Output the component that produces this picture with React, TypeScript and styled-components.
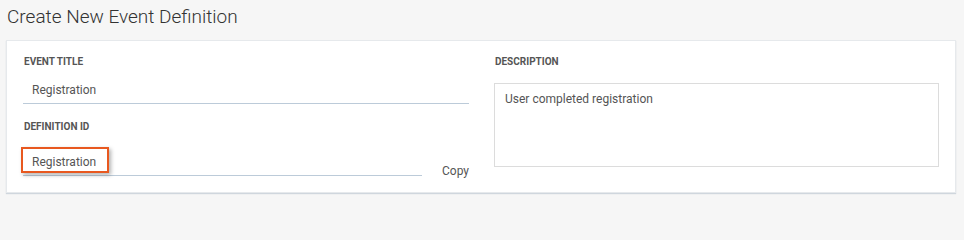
import React from "react";
import styled, { createGlobalStyle } from "styled-components";

const Global = createGlobalStyle`
  html, body { margin: 0; padding: 0; background: #f6f6f6; }
  body { font-family: Roboto, "Liberation Sans", sans-serif; }
  * { box-sizing: border-box; }
`;

const Page = styled.div`
  width: 964px;
  height: 207px;
  background: #f6f6f6;
  padding: 0 8px 0 6px;
`;

const Title = styled.h1`
  margin: 0;
  height: 40px;
  padding: 6px 0 0 1px;
  font-size: 19px;
  line-height: 22px;
  font-weight: 300;
  color: #333;
`;

const Card = styled.div`
  width: 950px;
  height: 153px;
  background: #fff;
  border: 1px solid #e6e9ec;
  box-shadow: 0 1px 1px rgba(160, 175, 190, 0.45);
  padding: 15px 16px 0 16px;
  display: grid;
  grid-template-columns: 446px 445px;
  column-gap: 25px;
`;

const Column = styled.div`
  display: flex;
  flex-direction: column;
`;

const Label = styled.div<{ $gap?: number }>`
  font-size: 10px;
  line-height: 12px;
  font-weight: 700;
  color: #555;
  text-transform: uppercase;
  margin-top: ${(p) => p.$gap ?? 0}px;
  padding-left: 1px;
`;

const InputRow = styled.div`
  display: flex;
  align-items: flex-end;
  gap: 20px;
`;

const InputWrap = styled.div`
  position: relative;
  flex: 1;
`;

const TextInput = styled.div<{ $top: number }>`
  margin-top: ${(p) => p.$top}px;
  height: 28px;
  border-bottom: 1px solid #bccbd9;
  padding: 1px 0 0 9px;
  font-size: 12px;
  line-height: 26px;
  color: #555;
`;

const Highlight = styled.div`
  position: absolute;
  left: -2px;
  width: 88px;
  height: 26px;
  border: 2px solid #e8581f;
  box-shadow: 2px 2px 4px rgba(0, 0, 0, 0.3);
`;

const CopyButton = styled.span`
  font-size: 12px;
  line-height: 15px;
  color: #555;
  margin-bottom: -3px;
`;

const TextArea = styled.div`
  margin-top: 15px;
  height: 84px;
  border: 1px solid #dcdcdc;
  padding: 7px 10px;
  font-size: 12px;
  line-height: 16px;
  color: #555;
`;

export default function App() {
  return (
    <>
      <Global />
      <Page>
        <Title>Create New Event Definition</Title>
        <Card>
          <Column>
            <Label>Event Title</Label>
            <TextInput $top={8}>Registration</TextInput>
            <Label $gap={17}>Definition ID</Label>
            <InputRow>
              <InputWrap>
                <TextInput $top={15}>Registration</TextInput>
                <Highlight style={{ top: 14 }} />
              </InputWrap>
              <CopyButton>Copy</CopyButton>
            </InputRow>
          </Column>
          <Column>
            <Label>Description</Label>
            <TextArea>User completed registration</TextArea>
          </Column>
        </Card>
      </Page>
    </>
  );
}
